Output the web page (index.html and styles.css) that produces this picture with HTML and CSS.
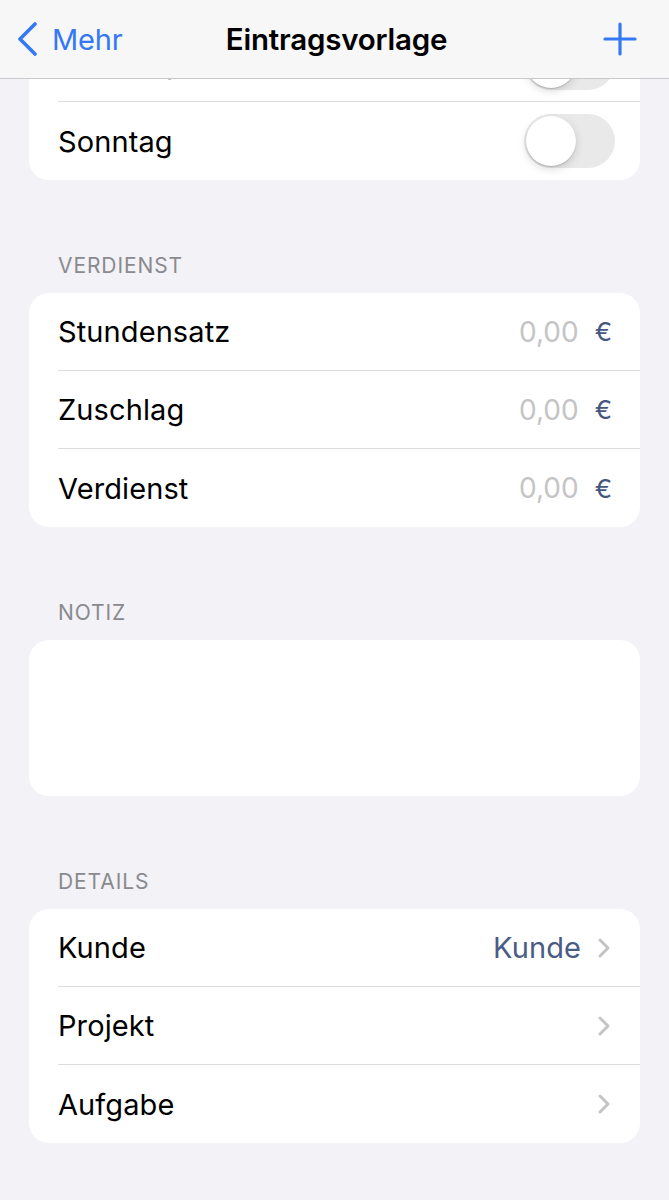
FILE: index.html
```html
<!DOCTYPE html>
<html lang="de">
<head>
<meta charset="utf-8">
<title>Eintragsvorlage</title>
<link rel="stylesheet" href="styles.css">
</head>
<body>
<header class="navbar">
  <div class="nav-left">
    <svg class="back-chev" width="22" height="34" viewBox="0 0 22 34"><path d="M19 2 L4 17 L19 32" fill="none" stroke="#3478f6" stroke-width="3.6" stroke-linecap="round" stroke-linejoin="round"/></svg>
    <span class="nav-back">Mehr</span>
  </div>
  <div class="nav-title">Eintragsvorlage</div>
  <div class="nav-right">
    <svg width="34" height="34" viewBox="0 0 34 34"><path d="M17 2 V32 M2 17 H32" fill="none" stroke="#3478f6" stroke-width="3.2" stroke-linecap="round"/></svg>
  </div>
</header>

<main class="content">
  <section class="card card-first">
    <div class="row"><span class="label">Samstag</span><span class="toggle"><span class="knob"></span></span></div>
    <div class="row"><span class="label">Sonntag</span><span class="toggle"><span class="knob"></span></span></div>
  </section>

  <h2 class="section-header">VERDIENST</h2>
  <section class="card">
    <div class="row row-value"><span class="label">Stundensatz</span><span class="amount"><span class="num">0,00</span><span class="cur">€</span></span></div>
    <div class="row row-value"><span class="label">Zuschlag</span><span class="amount"><span class="num">0,00</span><span class="cur">€</span></span></div>
    <div class="row row-value"><span class="label">Verdienst</span><span class="amount"><span class="num">0,00</span><span class="cur">€</span></span></div>
  </section>

  <h2 class="section-header">NOTIZ</h2>
  <section class="card note"></section>

  <h2 class="section-header">DETAILS</h2>
  <section class="card">
    <div class="row row-link"><span class="label">Kunde</span><span class="detail"><span class="detail-text">Kunde</span><svg class="chev" width="14" height="22" viewBox="0 0 14 22"><path d="M3 3 L11 11 L3 19" fill="none" stroke="#c4c4c7" stroke-width="3" stroke-linecap="round" stroke-linejoin="round"/></svg></span></div>
    <div class="row row-link"><span class="label">Projekt</span><span class="detail"><svg class="chev" width="14" height="22" viewBox="0 0 14 22"><path d="M3 3 L11 11 L3 19" fill="none" stroke="#c4c4c7" stroke-width="3" stroke-linecap="round" stroke-linejoin="round"/></svg></span></div>
    <div class="row row-link"><span class="label">Aufgabe</span><span class="detail"><svg class="chev" width="14" height="22" viewBox="0 0 14 22"><path d="M3 3 L11 11 L3 19" fill="none" stroke="#c4c4c7" stroke-width="3" stroke-linecap="round" stroke-linejoin="round"/></svg></span></div>
  </section>
</main>
</body>
</html>
```

FILE: styles.css
```css
* { box-sizing: border-box; }
html, body {
  margin: 0;
  padding: 0;
  background: #f2f2f7;
  font-family: Inter, "Liberation Sans", sans-serif;
  color: #000;
  overflow: hidden;
}
body { height: 1200px; }

.navbar {
  position: fixed;
  top: 0; left: 0; right: 0;
  height: 79px;
  background: #f7f7f7;
  border-bottom: 1px solid #c9c9cc;
  display: flex;
  align-items: center;
  justify-content: space-between;
  padding: 0 32px 0 16px;
  z-index: 10;
}
.nav-left {
  display: flex;
  align-items: center;
  gap: 14px;
  width: 150px;
}
.back-chev { display: block; }
.nav-back {
  font-size: 29px;
  color: #3478f6;
  letter-spacing: -0.2px;
}
.nav-title {
  font-size: 29.5px;
  font-weight: 600;
  letter-spacing: -0.2px;
  padding-left: 20px;
}
.nav-right {
  width: 150px;
  display: flex;
  justify-content: flex-end;
}
.nav-right svg { display: block; }

.content {
  padding: 24px 29px 40px;
}

.card {
  background: #fff;
  border-radius: 20px;
  overflow: hidden;
}
.note { height: 156px; }

.row {
  display: flex;
  align-items: center;
  justify-content: space-between;
  height: 78px;
  margin-left: 29px;
  padding-right: 25px;
  border-bottom: 1px solid #dcdce0;
}
.row:last-child { border-bottom: none; }

.label {
  font-size: 29px;
  letter-spacing: 0.1px;
}

.toggle {
  width: 91px;
  height: 54px;
  border-radius: 27px;
  background: #e9e9ea;
  display: flex;
  align-items: center;
  padding-left: 2px;
}
.knob {
  width: 50px;
  height: 50px;
  border-radius: 50%;
  background: #fff;
  box-shadow: 0 3px 8px rgba(0,0,0,0.15), 0 1px 1px rgba(0,0,0,0.16);
}

.row-value { padding-right: 28px; }
.amount {
  display: flex;
  align-items: center;
  gap: 16px;
  font-size: 28px;
}
.num { color: #c4c4c6; }
.cur { color: #46577f; font-size: 26px; }

.row-link { padding-right: 29px; }
.detail {
  display: flex;
  align-items: center;
  gap: 16px;
}
.detail-text {
  font-size: 29px;
  color: #4a5b85;
  letter-spacing: 0.1px;
}
.chev { display: block; }

.section-header {
  margin: 74px 0 15px 29px;
  font-size: 21px;
  font-weight: 400;
  line-height: 24px;
  color: #8a8a8e;
  letter-spacing: 0.9px;
}
```
